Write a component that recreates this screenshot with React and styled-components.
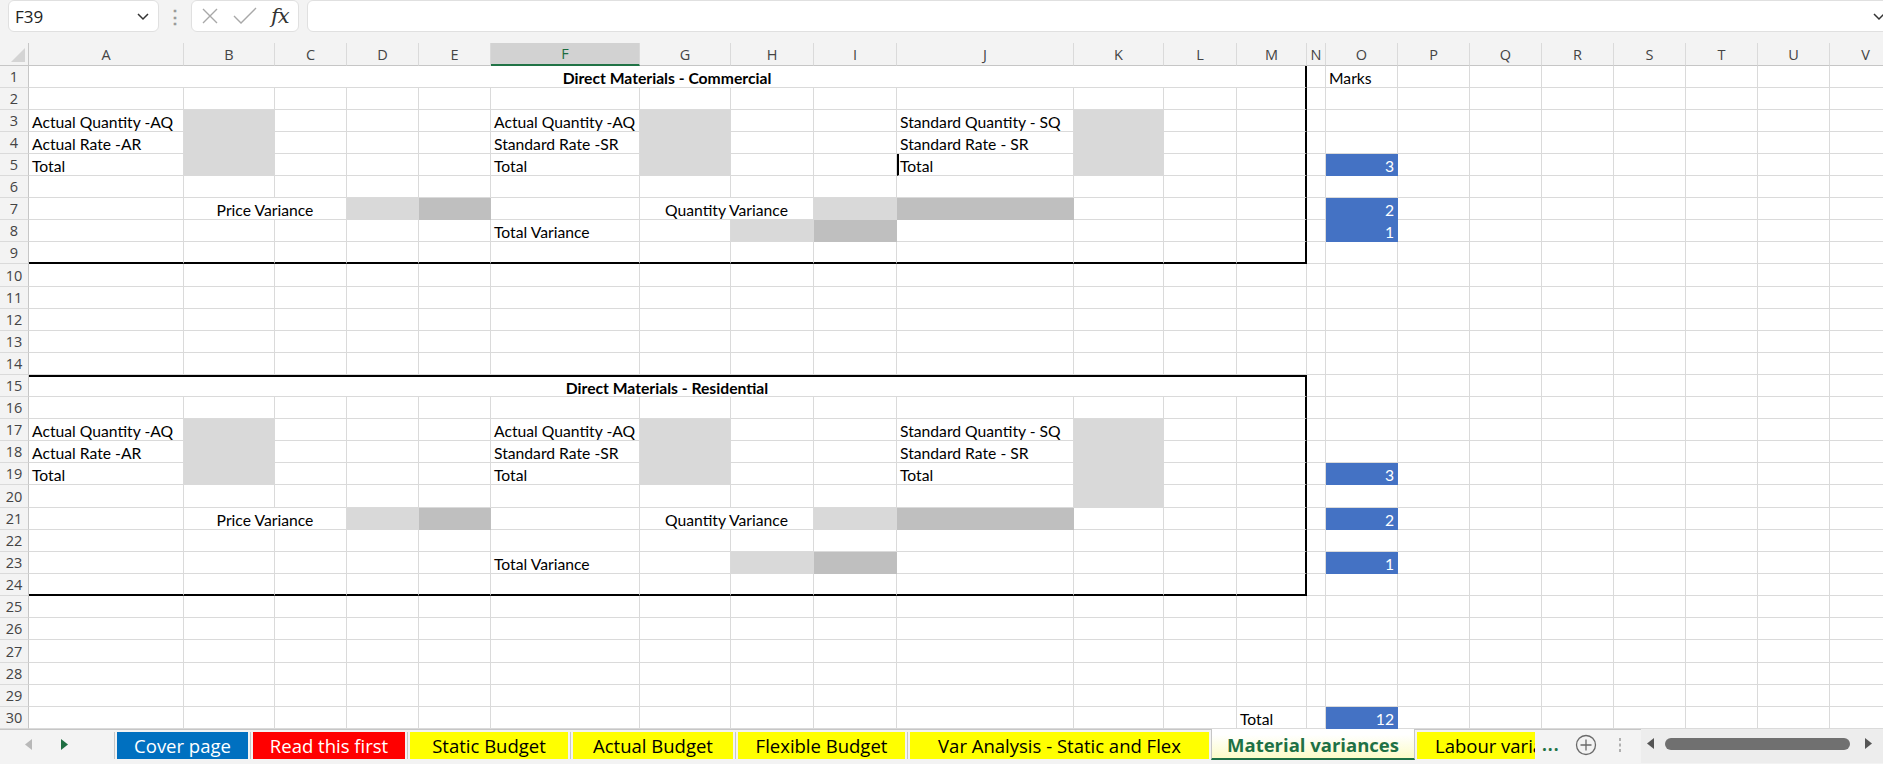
import React from "react";
import styled, { createGlobalStyle } from "styled-components";

const GlobalStyle = createGlobalStyle`
  html, body {
    margin: 0;
    padding: 0;
    background: #f3f3f3;
    overflow: hidden;
  }
  body {
    font-family: "Open Sans", "Noto Sans", sans-serif;
  }
`;

const UI_FONT = `"Open Sans", "Noto Sans", sans-serif`;
const CELL_FONT = `"Lato", "Liberation Sans", sans-serif`;
const GRID = "#dadada";

const COLS = [
  ["A", 155], ["B", 91], ["C", 72], ["D", 72], ["E", 72], ["F", 149],
  ["G", 91], ["H", 83], ["I", 83], ["J", 177], ["K", 90], ["L", 73],
  ["M", 70], ["N", 19], ["O", 72], ["P", 72], ["Q", 72], ["R", 72],
  ["S", 72], ["T", 72], ["U", 72], ["V", 72],
];
const ROWS = 30;
// Excel rounds row heights at this zoom, a few rows come out a pixel taller
const TALL_ROWS = [10, 20, 27];
const ROW_TRACKS = [
  "23px",
  ...Array.from({ length: ROWS }, (_, i) => (TALL_ROWS.includes(i + 1) ? "23px" : "22px")),
].join(" ");

const FILL = { light: "#d9d9d9", dark: "#bfbfbf", blue: "#4472c4" };

const light = { fill: "light" };
const dark = { fill: "dark" };
const mark = (t) => ({ t, fill: "blue", align: "right" });

// worksheet content, keyed by cell address
const CELLS = {
  A1: { t: "Direct Materials - Commercial", span: 13, bold: true, align: "center" },
  O1: { t: "Marks" },
  A3: { t: "Actual Quantity -AQ" },
  B3: { fill: "light", rows: 3 },
  F3: { t: "Actual Quantity -AQ" },
  G3: { fill: "light", rows: 3 },
  J3: { t: "Standard Quantity - SQ" },
  K3: { fill: "light", rows: 3 },
  A4: { t: "Actual Rate -AR" },
  F4: { t: "Standard Rate -SR" },
  J4: { t: "Standard Rate - SR" },
  A5: { t: "Total" },
  F5: { t: "Total" },
  J5: { t: "Total", edgeL: true },
  O5: mark("3"),
  B7: { t: "Price Variance", span: 2, align: "center" },
  D7: light,
  E7: dark,
  G7: { t: "Quantity Variance", span: 2, align: "center" },
  I7: light,
  J7: dark,
  O7: mark("2"),
  F8: { t: "Total Variance" },
  H8: light,
  I8: dark,
  O8: mark("1"),

  A15: { t: "Direct Materials - Residential", span: 13, bold: true, align: "center" },
  A17: { t: "Actual Quantity -AQ" },
  B17: { fill: "light", rows: 3 },
  F17: { t: "Actual Quantity -AQ" },
  G17: { fill: "light", rows: 3 },
  J17: { t: "Standard Quantity - SQ" },
  K17: { fill: "light", rows: 4 },
  A18: { t: "Actual Rate -AR" },
  F18: { t: "Standard Rate -SR" },
  J18: { t: "Standard Rate - SR" },
  A19: { t: "Total" },
  F19: { t: "Total" },
  J19: { t: "Total" },
  O19: mark("3"),
  B21: { t: "Price Variance", span: 2, align: "center" },
  D21: light,
  E21: dark,
  G21: { t: "Quantity Variance", span: 2, align: "center" },
  I21: light,
  J21: dark,
  O21: mark("2"),
  F23: { t: "Total Variance" },
  H23: light,
  I23: dark,
  O23: mark("1"),

  M30: { t: "Total" },
  O30: mark("12"),
};

// thick outlines around the two calculation blocks (cols A..M)
const BOXES = [
  { top: 1, bottom: 9, left: 0, right: 12, drawTop: false },
  { top: 15, bottom: 24, left: 0, right: 12, drawTop: true },
];

const TABS = [
  { name: "Cover page", bg: "#0070c0", color: "#fff", w: 131 },
  { name: "Read this first", bg: "#ff0000", color: "#fff", w: 152 },
  { name: "Static Budget", bg: "#ffff00", color: "#000", w: 158 },
  { name: "Actual Budget", bg: "#ffff00", color: "#000", w: 160 },
  { name: "Flexible Budget", bg: "#ffff00", color: "#000", w: 167 },
  { name: "Var Analysis - Static and Flex", bg: "#ffff00", color: "#000", w: 299 },
  { name: "Material variances", active: true, w: 204 },
  { name: "Labour variances", bg: "#ffff00", color: "#000", w: 118, clip: true },
];

/* ---------- formula bar ---------- */

const Toolbar = styled.div`
  display: flex;
  align-items: flex-start;
  height: 43px;
  padding-left: 8px;
  background: #f3f3f3;
  overflow: hidden;
`;

const NameBox = styled.div`
  width: 151px;
  height: 32px;
  margin-top: 0;
  box-sizing: border-box;
  background: #fff;
  border: 1px solid #e0e0e0;
  border-radius: 6px;
  display: flex;
  align-items: center;
  justify-content: space-between;
  padding: 0 8px 0 6px;
  font-family: ${UI_FONT};
  font-size: 17px;
  color: #222;
`;

const Grip = styled.div`
  width: 32px;
  height: 32px;
  display: flex;
  align-items: center;
  justify-content: center;
  color: #9a9a9a;
  font-size: 18px;
  font-weight: 700;
  font-family: ${UI_FONT};
`;

const FxBox = styled.div`
  width: 108px;
  height: 32px;
  box-sizing: border-box;
  background: #fff;
  border: 1px solid #e0e0e0;
  border-radius: 6px;
  display: flex;
  align-items: center;
  gap: 14px;
  padding-left: 9px;
`;

const FxText = styled.span`
  font-family: "DejaVu Serif", "Liberation Serif", serif;
  font-style: italic;
  font-size: 21px;
  color: #333;
  letter-spacing: -1px;
`;

const FormulaInput = styled.div`
  flex: 1;
  height: 32px;
  margin-left: 8px;
  margin-right: -12px;
  box-sizing: border-box;
  background: #fff;
  border: 1px solid #e0e0e0;
  border-radius: 6px;
  display: flex;
  justify-content: flex-end;
  align-items: flex-start;
  padding: 8px 8px 0 0;
`;

/* ---------- sheet grid ---------- */

const Viewport = styled.div`
  width: 100%;
  overflow: hidden;
  background: #fff;
`;

const Sheet = styled.div`
  display: grid;
  grid-template-columns: 29px ${COLS.map((c) => `${c[1]}px`).join(" ")};
  grid-template-rows: ${ROW_TRACKS};
  width: max-content;
`;

const Corner = styled.div`
  background: #f3f3f3;
  border-right: 1px solid #c6c6c6;
  border-bottom: 1px solid #c6c6c6;
  box-sizing: border-box;
  display: flex;
  align-items: flex-end;
  justify-content: flex-end;
  padding: 0 3px 3px 0;
`;

const ColHead = styled.div`
  background: ${(p) => (p.$selected ? "#d2d2d2" : "#f3f3f3")};
  border-right: 1px solid #dadada;
  border-bottom: ${(p) => (p.$selected ? "2px solid #217346" : "1px solid #c6c6c6")};
  box-sizing: border-box;
  display: flex;
  align-items: center;
  justify-content: center;
  font-family: ${UI_FONT};
  font-size: 14.5px;
  color: ${(p) => (p.$selected ? "#1b6b3f" : "#444")};
`;

const RowHead = styled.div`
  background: #f3f3f3;
  border-right: 1px solid #c6c6c6;
  border-bottom: 1px solid #dadada;
  box-sizing: border-box;
  display: flex;
  align-items: center;
  justify-content: center;
  font-family: ${UI_FONT};
  font-size: 14.5px;
  color: #444;
`;

const Cell = styled.div`
  grid-column: span ${(p) => p.$span};
  grid-row: span ${(p) => p.$rows};
  box-sizing: border-box;
  background: ${(p) => FILL[p.$fill] || "#fff"};
  color: ${(p) => (p.$fill === "blue" ? "#fff" : "#000")};
  border-right: ${(p) => (p.$edgeR ? "2px solid #000" : `1px solid ${FILL[p.$fill] || GRID}`)};
  border-bottom: ${(p) => (p.$edgeB ? "2px solid #000" : `1px solid ${FILL[p.$fill] || GRID}`)};
  border-top: ${(p) => (p.$edgeT ? "2px solid #000" : "none")};
  border-left: ${(p) => (p.$edgeL ? "2px solid #000" : "none")};
  display: flex;
  align-items: center;
  justify-content: ${(p) =>
    p.$align === "center" ? "center" : p.$align === "right" ? "flex-end" : "flex-start"};
  padding: 2px 3px 0 ${(p) => (p.$edgeL ? "1px" : "3px")};
  font-family: ${CELL_FONT};
  font-size: 15.7px;
  font-weight: ${(p) => (p.$bold ? 700 : 400)};
  white-space: nowrap;
  overflow: visible;
`;

/* ---------- sheet tabs ---------- */

const TabBar = styled.div`
  display: flex;
  align-items: flex-start;
  height: 35px;
  box-sizing: border-box;
  border-top: 1px solid #c6c6c6;
  background: #f3f3f3;
`;

const NavArea = styled.div`
  width: 114px;
  height: 29px;
  display: flex;
  align-items: center;
  gap: 29px;
  padding-left: 25px;
  box-sizing: border-box;
`;

const TabSlot = styled.div`
  display: flex;
  padding: 0 2px;
  border-left: ${(p) => (p.$sep ? "1px solid #c6c6c6" : "none")};
  height: 27px;
  margin-top: 2px;
`;

const Tab = styled.div`
  width: ${(p) => p.$w}px;
  height: 27px;
  background: ${(p) => p.$bg};
  color: ${(p) => p.$color};
  display: flex;
  align-items: center;
  justify-content: ${(p) => (p.$clip ? "flex-start" : "center")};
  padding-left: ${(p) => (p.$clip ? "18px" : "0")};
  box-sizing: border-box;
  overflow: hidden;
  white-space: nowrap;
  font-family: ${UI_FONT};
  font-size: 18.5px;
`;

const ActiveTab = styled.div`
  width: ${(p) => p.$w}px;
  height: 31px;
  margin-top: -1px;
  box-sizing: border-box;
  border-left: 1px solid #c6c6c6;
  border-right: 1px solid #c6c6c6;
  border-bottom: 2px solid #1e7145;
  background: linear-gradient(#ffffff 20%, #fcfcc8);
  display: flex;
  align-items: center;
  justify-content: center;
  padding-top: 2px;
  font-family: ${UI_FONT};
  font-size: 18.5px;
  font-weight: 700;
  color: #1e7145;
`;

const More = styled.div`
  height: 29px;
  display: flex;
  align-items: center;
  padding: 0 13px 0 5px;
  font-family: ${UI_FONT};
  font-weight: 700;
  font-size: 17px;
  color: #1e7145;
  letter-spacing: 1px;
`;

const IconSlot = styled.div`
  height: 29px;
  display: flex;
  align-items: center;
  justify-content: center;
  width: ${(p) => p.$w}px;
`;

const ScrollArea = styled.div`
  flex: 1;
  height: 34px;
  margin-top: -1px;
  background: #ededed;
  display: flex;
  align-items: center;
  padding: 0 11px 5px 6px;
  box-sizing: border-box;
`;

const Thumb = styled.div`
  flex: 1;
  height: 12px;
  margin: 0 15px 0 11px;
  border-radius: 6px;
  background: #707070;
`;

/* ---------- small drawings ---------- */

const Chevron = ({ size = 14, color = "#333" }) => (
  <svg width={size} height={size} viewBox="0 0 14 14">
    <polyline points="2,5 7,10 12,5" fill="none" stroke={color} strokeWidth="1.5" />
  </svg>
);

const Cross = () => (
  <svg width="18" height="18" viewBox="0 0 18 18">
    <path d="M2 2 L16 16 M16 2 L2 16" stroke="#a8a8a8" strokeWidth="1.4" fill="none" />
  </svg>
);

const Check = () => (
  <svg width="24" height="18" viewBox="0 0 24 18">
    <polyline points="1,9 8,16 23,1" stroke="#a8a8a8" strokeWidth="1.4" fill="none" />
  </svg>
);

const Triangle = ({ dir, color }) => (
  <svg width="7" height="11" viewBox="0 0 7 11">
    {dir === "left" ? (
      <polygon points="7,0 0,5.5 7,11" fill={color} />
    ) : (
      <polygon points="0,0 7,5.5 0,11" fill={color} />
    )}
  </svg>
);

const PlusCircle = () => (
  <svg width="22" height="22" viewBox="0 0 22 22">
    <circle cx="11" cy="11" r="9.5" fill="none" stroke="#6a6a6a" strokeWidth="1.3" />
    <path d="M11 5.5 V16.5 M5.5 11 H16.5" stroke="#6a6a6a" strokeWidth="1.3" />
  </svg>
);

const VDots = () => (
  <svg width="4" height="16" viewBox="0 0 4 16">
    <rect x="1" y="1" width="2" height="3" fill="#b0b0b0" />
    <rect x="1" y="6.5" width="2" height="3" fill="#b0b0b0" />
    <rect x="1" y="12" width="2" height="3" fill="#b0b0b0" />
  </svg>
);

const CornerMark = () => (
  <svg width="14" height="14" viewBox="0 0 14 14">
    <polygon points="14,0 14,14 0,14" fill="#d4d4d4" />
  </svg>
);

/* ---------- layout of worksheet cells ---------- */

function buildCells() {
  const covered = new Set();
  const out = [];
  for (let r = 1; r <= ROWS; r++) {
    out.push(<RowHead key={`rh${r}`}>{r}</RowHead>);
    COLS.forEach(([letter], c) => {
      const addr = `${letter}${r}`;
      if (covered.has(`${c}:${r}`)) return;
      const d = CELLS[addr] || {};
      const span = d.span || 1;
      const rows = d.rows || 1;
      for (let dr = 0; dr < rows; dr++)
        for (let dc = 0; dc < span; dc++) covered.add(`${c + dc}:${r + dr}`);
      const lastCol = c + span - 1;
      const lastRow = r + rows - 1;
      let edgeR = false;
      let edgeB = false;
      let edgeT = false;
      BOXES.forEach((b) => {
        const inside = c >= b.left && lastCol <= b.right && r >= b.top && lastRow <= b.bottom;
        if (!inside) return;
        if (lastCol === b.right) edgeR = true;
        if (lastRow === b.bottom) edgeB = true;
        if (b.drawTop && r === b.top) edgeT = true;
      });
      out.push(
        <Cell
          key={addr}
          $span={span}
          $rows={rows}
          $fill={d.fill}
          $align={d.align}
          $bold={d.bold}
          $edgeR={edgeR}
          $edgeB={edgeB}
          $edgeT={edgeT}
          $edgeL={d.edgeL}
        >
          {d.t}
        </Cell>
      );
    });
  }
  return out;
}

export default function App() {
  return (
    <>
      <GlobalStyle />
      <Toolbar>
        <NameBox>
          <span>F39</span>
          <Chevron />
        </NameBox>
        <Grip>⋮</Grip>
        <FxBox>
          <Cross />
          <Check />
          <FxText>fx</FxText>
        </FxBox>
        <FormulaInput>
          <Chevron />
        </FormulaInput>
      </Toolbar>
      <Viewport>
        <Sheet>
          <Corner>
            <CornerMark />
          </Corner>
          {COLS.map(([letter]) => (
            <ColHead key={letter} $selected={letter === "F"}>
              {letter}
            </ColHead>
          ))}
          {buildCells()}
        </Sheet>
      </Viewport>
      <TabBar>
        <NavArea>
          <Triangle dir="left" color="#b8b8b8" />
          <Triangle dir="right" color="#1e6e42" />
        </NavArea>
        {TABS.map((t, i) =>
          t.active ? (
            <ActiveTab key={t.name} $w={t.w}>
              {t.name}
            </ActiveTab>
          ) : (
            <TabSlot key={t.name} $sep={!TABS[i - 1]?.active}>
              <Tab $w={t.w} $bg={t.bg} $color={t.color} $clip={t.clip}>
                {t.name}
              </Tab>
            </TabSlot>
          )
        )}
        <More>...</More>
        <IconSlot $w={26}>
          <PlusCircle />
        </IconSlot>
        <IconSlot $w={42}>
          <VDots />
        </IconSlot>
        <ScrollArea>
          <Triangle dir="left" color="#555" />
          <Thumb />
          <Triangle dir="right" color="#555" />
        </ScrollArea>
      </TabBar>
    </>
  );
}
